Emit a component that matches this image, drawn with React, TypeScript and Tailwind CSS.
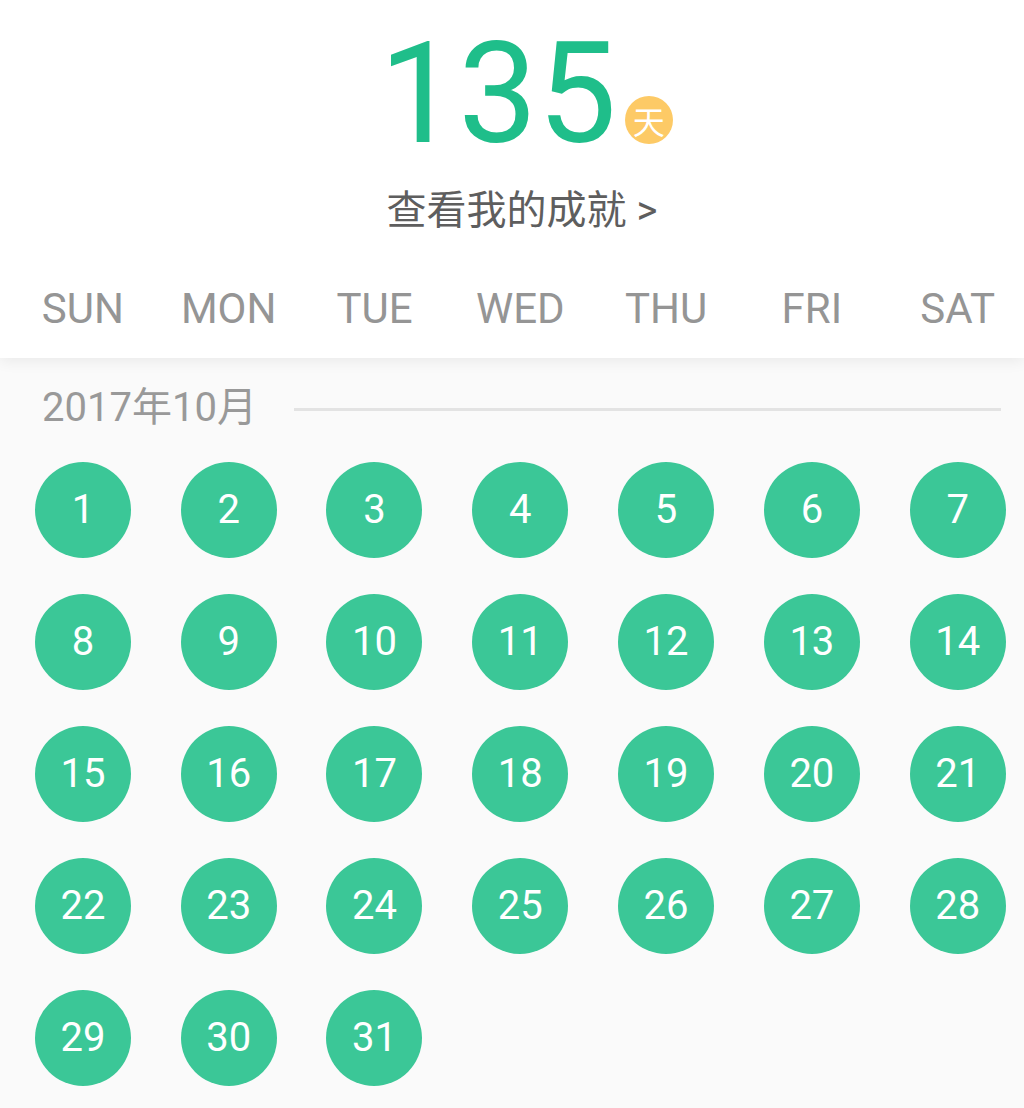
import React from "react";

const DAYS = ["SUN", "MON", "TUE", "WED", "THU", "FRI", "SAT"];

export default function App() {
  const dates: (number | null)[] = Array.from({ length: 31 }, (_, i) => i + 1);
  return (
    <div className="w-[1024px] h-[1108px] overflow-hidden bg-[#fafafa] font-['Roboto','Noto_Sans_CJK_SC',sans-serif]">
      <div className="relative z-10 bg-white h-[358px] shadow-[0_3px_14px_rgba(0,0,0,0.07)] flex flex-col">
        <div className="pt-[23px] pl-[28px] flex justify-center items-center">
          <span className="text-[141px] leading-none font-normal text-[#1fbe8a]">135</span>
          <span className="ml-[8px] mt-[52px] w-[48px] h-[48px] rounded-full bg-[#fdca66] text-white text-[32px] leading-none flex items-center justify-center font-['Noto_Sans_CJK_SC',sans-serif]">
            天
          </span>
        </div>
        <div className="mt-[27px] pl-[20px] h-[40px] flex justify-center text-[40px] leading-none text-[#5e5e5e]">
          <span>查看我的成就 &gt;</span>
        </div>
        <div className="mt-[57px] pl-[10px] grid grid-cols-[repeat(7,145.8px)]">
          {DAYS.map((d) => (
            <div key={d} className="h-[44px] flex justify-center text-[42px] leading-none font-normal text-[#959595]">
              {d}
            </div>
          ))}
        </div>
      </div>
      <div className="pt-[30px] pl-[42px] pr-[23px] h-[40px] box-content flex items-center">
        <span className="text-[40px] leading-none text-[#999999] whitespace-nowrap">2017年10月</span>
        <div className="ml-[37px] mt-[2px] flex-1 h-[3px] bg-[#e3e3e3]" />
      </div>
      <div className="mt-[34px] pl-[10px] grid grid-cols-[repeat(7,145.8px)] gap-y-[36px]">
        {dates.map((n, i) => (
          <div key={i} className="flex justify-center">
            <div className="w-[96px] h-[96px] rounded-full bg-[#3bc797] text-white text-[40px] leading-none flex items-center justify-center">
              {n}
            </div>
          </div>
        ))}
      </div>
    </div>
  );
}
